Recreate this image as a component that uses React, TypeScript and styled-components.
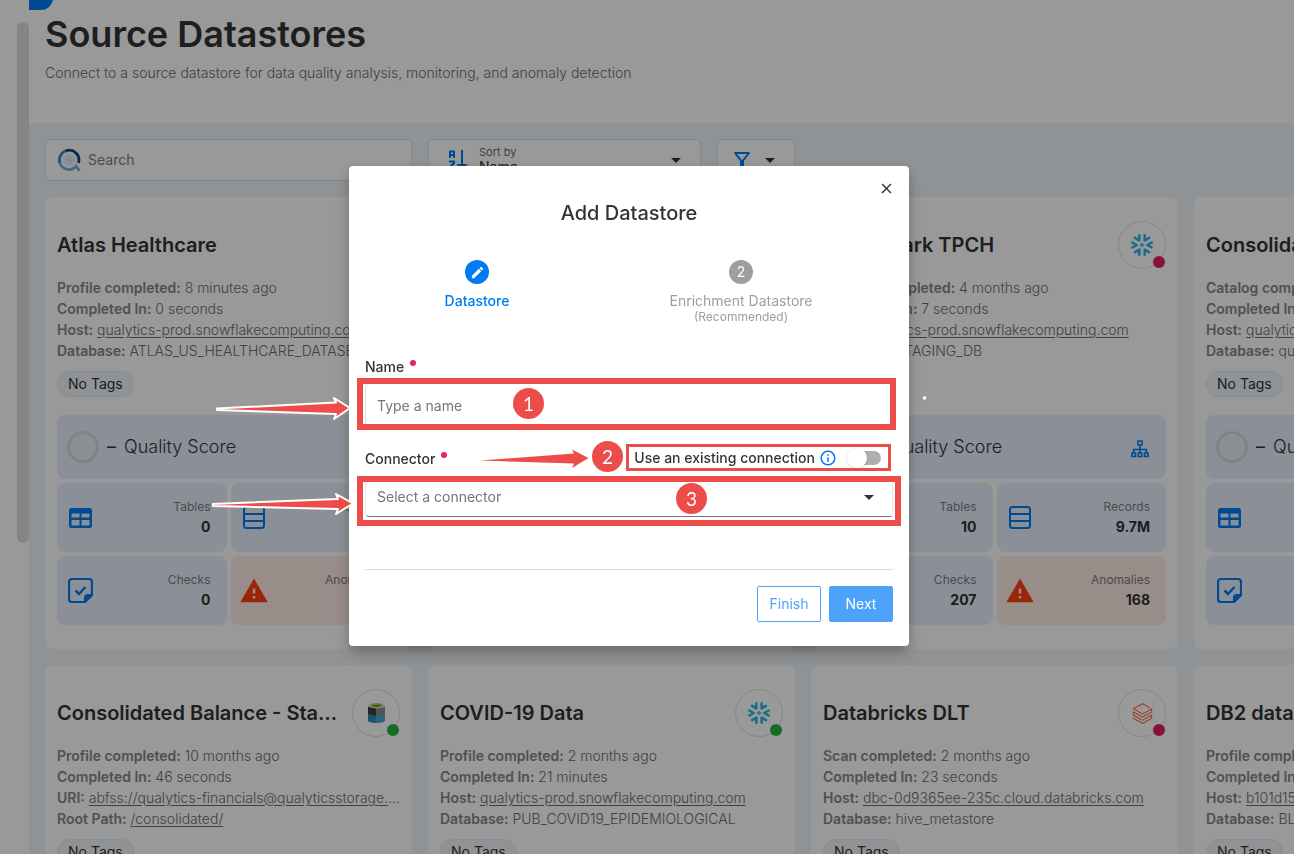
import React from 'react';
import styled, { createGlobalStyle } from 'styled-components';
import { MdArrowDropDown, MdClose, MdEdit, MdInfoOutline, MdOutlineFilterAlt, MdWarning, MdChevronLeft } from 'react-icons/md';
import { SiDatabricks } from 'react-icons/si';

const color = {
  ink: '#333333',
  muted: '#6c6c6c',
  strong: '#868686',
  blue: '#007bf5',
  page: '#eef5fa',
  tile: '#e8f0fd',
  danger: '#ffebe7',
  mark: '#ec4d4b',
  required: '#e91e63',
};

const GlobalStyle = createGlobalStyle`
  *, *::before, *::after { box-sizing: border-box; }
  body {
    margin: 0;
    overflow: hidden;
    font-family: Inter, sans-serif;
    font-size: 14px;
    line-height: 20px;
    color: ${color.ink};
    background: #fff;
  }
  button, input, select { font: inherit; color: inherit; }
  h1, h2, h3, p { margin: 0; }
  svg { display: block; flex: none; }
`;

const Shell = styled.div`
  display: flex;
  height: 100vh;
  overflow: hidden;
`;

const Rail = styled.aside`
  flex: 0 0 29px;
  padding-top: 22px;
  display: flex;
  justify-content: flex-end;
`;

const RailThumb = styled.div`
  width: 12px;
  height: 521px;
  border-radius: 6px;
  background: #dedede;
`;

const Main = styled.main`
  position: relative;
  flex: 1;
  min-width: 0;
  background: ${color.page};
  overflow: hidden;
`;

const CollapseButton = styled.button`
  position: absolute;
  top: -18px;
  left: 0;
  width: 24px;
  height: 28px;
  padding: 0;
  border: 0;
  border-radius: 0 12px 12px 0;
  background: ${color.blue};
  color: #fff;
  display: grid;
  place-items: center;
`;

const PageHeader = styled.header`
  background: #fff;
  height: 123px;
  padding: 10px 16px 0;
`;

const PageTitle = styled.h1`
  font-size: 36px;
  line-height: 48px;
  font-weight: 600;
  white-space: nowrap;
`;

const PageIntro = styled.p`
  margin-top: 5px;
  font-weight: 300;
  color: ${color.muted};
`;

const Toolbar = styled.div`
  display: flex;
  gap: 16px;
  padding: 16px;
`;

const ToolBox = styled.div<{ $width: number }>`
  display: flex;
  align-items: center;
  width: ${(p) => p.$width}px;
  height: 42px;
  background: #fff;
  border: 1px solid #e0e0e0;
  border-radius: 4px;
`;

const SearchBox = styled(ToolBox)`
  gap: 6px;
  padding: 0 12px 0 11px;
`;

const PlainInput = styled.input`
  flex: 1;
  min-width: 0;
  border: 0;
  outline: 0;
  padding: 0;
  background: transparent;
  &::placeholder { color: #7d7d7d; opacity: 1; }
`;

const SortBox = styled(ToolBox)`
  padding: 0 12px 0 18px;
  gap: 10px;
  align-items: flex-start;
  > svg { align-self: center; }
`;

const SortField = styled.label`
  flex: 1;
  display: flex;
  flex-direction: column;
  padding-top: 5px;
  font-size: 11px;
  line-height: 14px;
  color: ${color.muted};
`;

const PlainSelect = styled.select`
  appearance: none;
  border: 0;
  outline: 0;
  padding: 0;
  background: transparent;
  font-size: 14px;
  line-height: 16px;
  color: ${color.ink};
`;

const FilterButton = styled.button`
  display: flex;
  align-items: center;
  justify-content: center;
  gap: 4px;
  width: 78px;
  height: 42px;
  padding: 0;
  background: #fff;
  border: 1px solid #e0e0e0;
  border-radius: 4px;
`;

const CardGrid = styled.section`
  display: grid;
  grid-template-columns: repeat(4, minmax(367px, 1fr));
  gap: 16px;
  padding: 0 16px 16px;
`;

const Card = styled.article`
  background: #fff;
  border-radius: 8px;
  padding: 24px 12px;
  min-width: 0;
`;

const CardHead = styled.div`
  display: flex;
  align-items: center;
  justify-content: space-between;
  gap: 12px;
  height: 48px;
`;

const CardTitle = styled.h3`
  font-size: 20px;
  line-height: 28px;
  font-weight: 600;
  white-space: nowrap;
  overflow: hidden;
  text-overflow: ellipsis;
`;

const SourceBadge = styled.div`
  position: relative;
  flex: none;
  display: grid;
  place-items: center;
  width: 48px;
  height: 48px;
  border: 1px solid #e0e0e0;
  border-radius: 50%;
`;

const StatusDot = styled.span<{ $ok: boolean }>`
  position: absolute;
  right: 0;
  bottom: 0;
  width: 12px;
  height: 12px;
  border-radius: 50%;
  background: ${(p) => (p.$ok ? '#24b53f' : '#e31b5f')};
`;

const Facts = styled.div`
  margin-top: 8px;
  color: ${color.muted};
  font-weight: 300;
  line-height: 21px;
`;

const Fact = styled.p`
  white-space: nowrap;
  overflow: hidden;
  text-overflow: ellipsis;
  b { font-weight: 600; color: ${color.strong}; }
  a { color: inherit; text-underline-offset: 2px; }
`;

const Tag = styled.span`
  display: inline-flex;
  align-items: center;
  height: 26px;
  margin-top: 10px;
  padding: 0 10px;
  border: 1px solid #dfeaf3;
  border-radius: 13px;
  background: ${color.page};
`;

const Quality = styled.div`
  display: flex;
  align-items: center;
  height: 64px;
  margin-top: 18px;
  padding: 0 17px 0 10px;
  border-radius: 8px;
  background: ${color.tile};
  font-size: 18px;
  line-height: 24px;
  svg { margin: 4px 0 0 auto; }
`;

const Ring = styled.span`
  width: 32px;
  height: 32px;
  margin-right: 8px;
  border: 3px solid #dcd8d8;
  border-radius: 50%;
`;

const QualityName = styled.span`
  margin-left: 8px;
  font-weight: 300;
`;

const Tiles = styled.div`
  display: grid;
  grid-template-columns: 1fr 1fr;
  gap: 4px;
  margin-top: 4px;
`;

const Tile = styled.div<{ $alert?: boolean }>`
  display: flex;
  align-items: center;
  justify-content: space-between;
  height: 69px;
  padding: 0 16px 0 10px;
  border-radius: 8px;
  background: ${(p) => (p.$alert ? color.danger : color.tile)};
`;

const TileIcon = styled.span`
  display: flex;
  justify-content: center;
  width: 26px;
`;

const TileText = styled.div`
  padding-bottom: 2px;
  text-align: right;
  font-size: 12px;
  color: #7d7d7d;
  b { display: block; font-size: 14px; font-weight: 700; color: ${color.ink}; }
`;

const Overlay = styled.div`
  position: fixed;
  inset: 0;
  display: flex;
  align-items: center;
  justify-content: center;
  padding: 0 36px 42px 0;
  background: rgba(0, 0, 0, 0.4);
`;

const Dialog = styled.form`
  position: relative;
  width: 560px;
  padding: 32px 16px 24px;
  border-radius: 4px;
  background: #fff;
  box-shadow: 0 8px 12px -6px rgba(0, 0, 0, 0.2), 0 8px 16px 2px rgba(0, 0, 0, 0.12), 0 3px 10px 1px rgba(0, 0, 0, 0.1);
`;

const CloseButton = styled.button`
  position: absolute;
  top: 10px;
  right: 11px;
  width: 24px;
  height: 24px;
  padding: 0;
  border: 0;
  background: none;
  display: grid;
  place-items: center;
`;

const DialogTitle = styled.h2`
  font-size: 20px;
  line-height: 30px;
  font-weight: 500;
  text-align: center;
`;

const Steps = styled.div`
  display: flex;
  justify-content: center;
  margin-top: 32px;
  padding-right: 40px;
`;

const Step = styled.div<{ $active?: boolean }>`
  position: relative;
  flex: 0 0 264px;
  display: flex;
  flex-direction: column;
  align-items: center;
  color: ${(p) => (p.$active ? color.blue : '#9e9e9e')};
  font-weight: ${(p) => (p.$active ? 500 : 400)};
  small { font-size: 12px; line-height: 12px; }
  & + &::before {
    content: '';
    position: absolute;
    top: 12px;
    right: calc(50% + 20px);
    width: 224px;
    height: 1px;
    background: #dcdcdc;
  }
`;

const StepDot = styled.span<{ $active?: boolean }>`
  display: grid;
  place-items: center;
  width: 24px;
  height: 24px;
  margin-bottom: 7px;
  border-radius: 50%;
  background: ${(p) => (p.$active ? color.blue : '#9e9e9e')};
  color: #fff;
`;

const FieldHead = styled.div<{ $top: number }>`
  display: flex;
  align-items: flex-start;
  justify-content: space-between;
  height: 20px;
  margin-top: ${(p) => p.$top}px;
`;

const FieldLabel = styled.label`
  display: flex;
  font-weight: 500;
  &::after {
    content: '';
    width: 6px;
    height: 6px;
    margin: 3px 0 0 6px;
    border-radius: 50%;
    background: ${color.required};
  }
`;

const TextBox = styled.input`
  display: block;
  width: 100%;
  height: 44px;
  margin-top: 6px;
  padding: 0 11px;
  border: 1px solid #e0e0e0;
  border-radius: 4px;
  outline: 0;
  &::placeholder { color: #757575; opacity: 1; }
`;

const SelectWrap = styled.div`
  position: relative;
  margin-top: 8px;
  > svg { position: absolute; top: 8px; right: 12px; pointer-events: none; }
`;

const ConnectorSelect = styled.select`
  appearance: none;
  display: block;
  width: 100%;
  height: 40px;
  padding: 0 11px;
  border: 1px solid #e6e6e6;
  border-bottom-color: #757575;
  border-radius: 4px;
  outline: 0;
  background: #fff;
  color: #757575;
`;

const SwitchLabel = styled.label`
  display: flex;
  align-items: center;
  gap: 4px;
  padding-right: 12px;
  line-height: 18px;
  font-weight: 500;
  > svg { color: ${color.blue}; }
`;

const Switch = styled.input`
  appearance: none;
  position: relative;
  width: 32px;
  height: 14px;
  margin: 0 0 0 8px;
  border-radius: 7px;
  background: #afafaf;
  &::before {
    content: '';
    position: absolute;
    left: -2px;
    top: -3px;
    width: 20px;
    height: 20px;
    border-radius: 50%;
    background: #fff;
    box-shadow: 0 1px 3px rgba(0, 0, 0, 0.18);
  }
`;

const Actions = styled.div`
  display: flex;
  justify-content: flex-end;
  gap: 8px;
  margin-top: 52px;
  padding-top: 16px;
  border-top: 1px solid #dcdcdc;
`;

const ActionButton = styled.button<{ $solid?: boolean }>`
  width: 64px;
  height: 36px;
  padding: 0;
  border: 1px solid #4da3f9;
  border-radius: 2px;
  background: ${(p) => (p.$solid ? '#4da3f9' : '#fff')};
  color: ${(p) => (p.$solid ? '#fff' : '#4da3f9')};
`;

const Frame = styled.div<{ $x: number; $y: number; $w: number; $h: number; $b: number }>`
  position: absolute;
  left: ${(p) => p.$x}px;
  top: ${(p) => p.$y}px;
  width: ${(p) => p.$w}px;
  height: ${(p) => p.$h}px;
  border: ${(p) => p.$b}px solid ${color.mark};
  pointer-events: none;
`;

const Marker = styled.span<{ $x: number; $y: number }>`
  position: absolute;
  left: ${(p) => p.$x}px;
  top: ${(p) => p.$y}px;
  width: 31px;
  height: 31px;
  border-radius: 50%;
  background: ${color.mark};
  color: #fff;
  font-family: Lato, sans-serif;
  font-size: 19px;
  line-height: 31px;
  text-align: center;
`;

const Arrows = styled.svg`
  position: absolute;
  inset: 0;
  width: 100%;
  height: 100%;
  overflow: visible;
  pointer-events: none;
`;

const BrandQ = () => (
  <svg width="25" height="25" viewBox="0 0 25 25" fill="none" aria-hidden="true">
    <defs>
      <radialGradient id="lens"><stop offset="0" stopColor="#d3e3f2" /><stop offset="1" stopColor="#fbfdff" /></radialGradient>
    </defs>
    <circle cx="12" cy="12" r="8" fill="url(#lens)" />
    <path d="M2.6 14A9.8 9.8 0 0 0 17 20.3L19 18l3.5 5" stroke="#79afe0" strokeWidth="2.8" />
    <path d="M2.7 14.5A9.7 9.7 0 0 1 10 2.5" stroke="#3d86c9" strokeWidth="2.8" />
    <path d="M9 2.8A9.7 9.7 0 0 1 21.4 15" stroke="#064b85" strokeWidth="2.8" />
  </svg>
);

const SortIcon = () => (
  <svg width="22" height="22" viewBox="0 0 22 22" fill="none" stroke={color.blue} strokeWidth="2" aria-hidden="true">
    <path d="M3 9V2.500h4V9M3 6h4M2 12.500h5v1.500l-4 4v1h5M15 1v16M11.500 16h7L15 20z" />
  </svg>
);

const SitemapIcon = () => (
  <svg width="18" height="18" viewBox="0 0 18 18" fill="none" stroke={color.blue} strokeWidth="1.600" aria-hidden="true">
    <path d="M7 1h4v4H7zM1 13h3.500v3.500H1zM7.250 13h3.500v3.500h-3.500zM13.500 13H17v3.500h-3.500zM9 5v8M2.750 13V9.500h12.500V13" />
  </svg>
);

const TableIcon = () => (
  <svg width="23" height="20" viewBox="0 0 23 20" aria-hidden="true">
    <path fill={color.blue} fillRule="evenodd" d="M2.500 0h18A2.500 2.500 0 0 1 23 2.500v15a2.500 2.500 0 0 1-2.500 2.500h-18A2.500 2.500 0 0 1 0 17.500v-15A2.500 2.500 0 0 1 2.500 0zM2.500 5.500v4h8v-4zM12.500 5.500v4h8v-4zM2.500 12v5.500h8V12zM12.500 12v5.500h8V12z" />
  </svg>
);

const RecordsIcon = () => (
  <svg width="22" height="23" viewBox="0 0 22 23" fill="none" stroke={color.blue} strokeWidth="2" aria-hidden="true">
    <rect x="1" y="1" width="20" height="21" rx="2.500" />
    <path d="M1 8h20M1 15h20" />
  </svg>
);

const ChecksIcon = () => (
  <svg width="25" height="25" viewBox="0 0 25 25" fill="none" stroke={color.blue} strokeWidth="2.200" aria-hidden="true">
    <path d="M17 24H4a3 3 0 0 1-3-3V4a3 3 0 0 1 3-3h17a3 3 0 0 1 3 3v13z" />
    <path d="M17 24v-4a3 3 0 0 1 3-3h4z" fill={color.blue} />
    <path d="M7.500 12.500l3.500 3.500 6.500-7" strokeWidth="2.500" />
  </svg>
);

const SnowIcon = () => (
  <svg width="22" height="22" viewBox="-11 -11 22 22" fill="none" stroke="#29b5e8" strokeWidth="2.500" strokeLinecap="round" strokeLinejoin="round" aria-hidden="true">
    {[0, 60, 120, 180, 240, 300].map((turn) => (
      <path key={turn} d="M9.700 -2.500L5.300 0L9.700 2.500" transform={`rotate(${turn})`} />
    ))}
    <path d="M0 -1.500L1.500 0L0 1.500L-1.500 0z" strokeWidth="1.100" />
  </svg>
);

const LakeIcon = () => (
  <svg width="17" height="20" viewBox="0 0 17 20" aria-hidden="true">
    <path d="M0 3.500h8.500V19.500C3 19.500 0 18.500 0 17z" fill="#3c3c3c" />
    <path d="M8.500 3.500H17V17c0 1.500-3 2.500-8.500 2.500z" fill="#8a8a8a" />
    <path d="M0 12c2-1.500 3.500-1 4.500 0s2.500 1 4 0V20C3 20 0 18.800 0 17z" fill="#2f8bb8" />
    <path d="M8.500 12c2.500-1.800 5-1 8.500 0v5c0 1.800-3 3-8.500 3z" fill="#4aa8cf" />
    <ellipse cx="8.500" cy="2.700" rx="8.500" ry="2.700" fill="#e8e8e8" />
    <ellipse cx="8.500" cy="2.200" rx="6.200" ry="2" fill="#a6c52b" />
    <ellipse cx="8.500" cy="2.900" rx="4" ry="1" fill="#6f9a1e" />
  </svg>
);

type FactItem = { name: string; value: string; link?: boolean };
type Source = {
  title: string;
  kind: 'snowflake' | 'lake' | 'databricks';
  ok: boolean;
  facts: FactItem[];
  stats: [string, string, string, string];
};

const host = 'qualytics-prod.snowflakecomputing.com';

const facts = (event: string, when: string, took: string, third: FactItem, fourth: FactItem): FactItem[] => [
  { name: event, value: when },
  { name: 'Completed In', value: took },
  third,
  fourth,
];

const sources: (Source | null)[] = [
  {
    title: 'Atlas Healthcare', kind: 'snowflake', ok: true, stats: ['0', '0', '0', '0'],
    facts: facts('Profile completed', '8 minutes ago', '0 seconds', { name: 'Host', value: host, link: true }, { name: 'Database', value: 'ATLAS_US_HEALTHCARE_DATASET' }),
  },
  null,
  {
    title: 'Benchmark TPCH', kind: 'snowflake', ok: false, stats: ['10', '9.7M', '207', '168'],
    facts: facts('Catalog completed', '4 months ago', '7 seconds', { name: 'Host', value: host, link: true }, { name: 'Database', value: 'STAGING_DB' }),
  },
  {
    title: 'Consolidated Balance', kind: 'snowflake', ok: true, stats: ['0', '0', '0', '0'],
    facts: facts('Catalog completed', '4 months ago', '7 seconds', { name: 'Host', value: host, link: true }, { name: 'Database', value: 'qualytics' }),
  },
  {
    title: 'Consolidated Balance - Statement', kind: 'lake', ok: true, stats: ['0', '0', '0', '0'],
    facts: facts('Profile completed', '10 months ago', '46 seconds', { name: 'URI', value: 'abfss://qualytics-financials@qualyticsstorage.dfs.core', link: true }, { name: 'Root Path', value: '/consolidated/', link: true }),
  },
  {
    title: 'COVID-19 Data', kind: 'snowflake', ok: true, stats: ['0', '0', '0', '0'],
    facts: facts('Profile completed', '2 months ago', '21 minutes', { name: 'Host', value: host, link: true }, { name: 'Database', value: 'PUB_COVID19_EPIDEMIOLOGICAL' }),
  },
  {
    title: 'Databricks DLT', kind: 'databricks', ok: false, stats: ['0', '0', '0', '0'],
    facts: facts('Scan completed', '2 months ago', '23 seconds', { name: 'Host', value: 'dbc-0d9365ee-235c.cloud.databricks.com', link: true }, { name: 'Database', value: 'hive_metastore' }),
  },
  {
    title: 'DB2 dataset', kind: 'snowflake', ok: true, stats: ['0', '0', '0', '0'],
    facts: facts('Profile completed', '2 months ago', '23 seconds', { name: 'Host', value: 'b101d15', link: true }, { name: 'Database', value: 'BLUDB' }),
  },
];

const sourceIcon = {
  snowflake: <SnowIcon />,
  lake: <LakeIcon />,
  databricks: <SiDatabricks size={21} color="#ff5f46" />,
};

function SourceCard({ source }: { source: Source }) {
  const [tables, records, checks, anomalies] = source.stats;
  return (
    <Card>
      <CardHead>
        <CardTitle>{source.title}</CardTitle>
        <SourceBadge>
          {sourceIcon[source.kind]}
          <StatusDot $ok={source.ok} />
        </SourceBadge>
      </CardHead>
      <Facts>
        {source.facts.map((f) => (
          <Fact key={f.name}>
            <b>{f.name}:</b> {f.link ? <a href="#source">{f.value}</a> : f.value}
          </Fact>
        ))}
      </Facts>
      <Tag>No Tags</Tag>
      <Quality>
        <Ring />
        <span>–</span>
        <QualityName>Quality Score</QualityName>
        <SitemapIcon />
      </Quality>
      <Tiles>
        <Tile><TileIcon><TableIcon /></TileIcon><TileText>Tables<b>{tables}</b></TileText></Tile>
        <Tile><TileIcon><RecordsIcon /></TileIcon><TileText>Records<b>{records}</b></TileText></Tile>
        <Tile><TileIcon><ChecksIcon /></TileIcon><TileText>Checks<b>{checks}</b></TileText></Tile>
        <Tile $alert><TileIcon><MdWarning size={30} color="#ff4013" /></TileIcon><TileText>Anomalies<b>{anomalies}</b></TileText></Tile>
      </Tiles>
    </Card>
  );
}

function AddDatastore() {
  return (
    <Overlay>
      <Dialog role="dialog" aria-labelledby="dialog-title" onSubmit={(e) => e.preventDefault()}>
        <CloseButton type="button" aria-label="Close"><MdClose size={17} /></CloseButton>
        <DialogTitle id="dialog-title">Add Datastore</DialogTitle>
        <Steps>
          <Step $active>
            <StepDot $active><MdEdit size={15} /></StepDot>
            Datastore
          </Step>
          <Step>
            <StepDot>2</StepDot>
            Enrichment Datastore
            <small>(Recommended)</small>
          </Step>
        </Steps>
        <FieldHead $top={34}><FieldLabel htmlFor="name">Name</FieldLabel></FieldHead>
        <TextBox id="name" placeholder="Type a name" />
        <FieldHead $top={22}>
          <FieldLabel htmlFor="connector">Connector</FieldLabel>
          <SwitchLabel>
            Use an existing connection
            <MdInfoOutline size={18} />
            <Switch type="checkbox" />
          </SwitchLabel>
        </FieldHead>
        <SelectWrap>
          <ConnectorSelect id="connector"><option>Select a connector</option></ConnectorSelect>
          <MdArrowDropDown size={24} />
        </SelectWrap>
        <Actions>
          <ActionButton type="button">Finish</ActionButton>
          <ActionButton type="submit" $solid>Next</ActionButton>
        </Actions>

        <Frame $x={8} $y={212} $w={539} $h={52} $b={6} />
        <Frame $x={277} $y={278} $w={265} $h={27} $b={3} />
        <Frame $x={8} $y={310} $w={544} $h={50} $b={6} />
        <Arrows aria-hidden="true" fill={color.mark}>
          <g stroke="#fff" strokeWidth="2" strokeLinejoin="round">
            <path d="M-132 242.500L-13 236.500L-15 232L1 242L-15 253L-13 248L-132 244z" />
            <path d="M-136 338L-11 333L-13 328L4 337.500L-13 348L-11 343L-136 340z" />
          </g>
          <path d="M131 294.500L225 287.500L223 283.500L239.500 292L223 302L225 297.500z" />
          <circle cx="575.500" cy="232" r="1.800" fill="#fff" />
        </Arrows>
        <Marker $x={164} $y={222}>1</Marker>
        <Marker $x={243} $y={275}>2</Marker>
        <Marker $x={327} $y={317}>3</Marker>
      </Dialog>
    </Overlay>
  );
}

export default function App() {
  return (
    <>
      <GlobalStyle />
      <Shell>
        <Rail><RailThumb /></Rail>
        <Main>
          <CollapseButton aria-label="Collapse menu"><MdChevronLeft size={18} /></CollapseButton>
          <PageHeader>
            <PageTitle>Source Datastores</PageTitle>
            <PageIntro>Connect to a source datastore for data quality analysis, monitoring, and anomaly detection</PageIntro>
          </PageHeader>
          <Toolbar>
            <SearchBox $width={367}>
              <BrandQ />
              <PlainInput aria-label="Search" placeholder="Search" />
            </SearchBox>
            <SortBox $width={273}>
              <SortIcon />
              <SortField>
                Sort by
                <PlainSelect><option>Name</option></PlainSelect>
              </SortField>
              <MdArrowDropDown size={24} />
            </SortBox>
            <FilterButton aria-label="Filter">
              <MdOutlineFilterAlt size={24} color={color.blue} />
              <MdArrowDropDown size={24} />
            </FilterButton>
          </Toolbar>
          <CardGrid>
            {sources.map((s, i) => (s ? <SourceCard key={s.title} source={s} /> : <Card key={i} />))}
          </CardGrid>
        </Main>
      </Shell>
      <AddDatastore />
    </>
  );
}
